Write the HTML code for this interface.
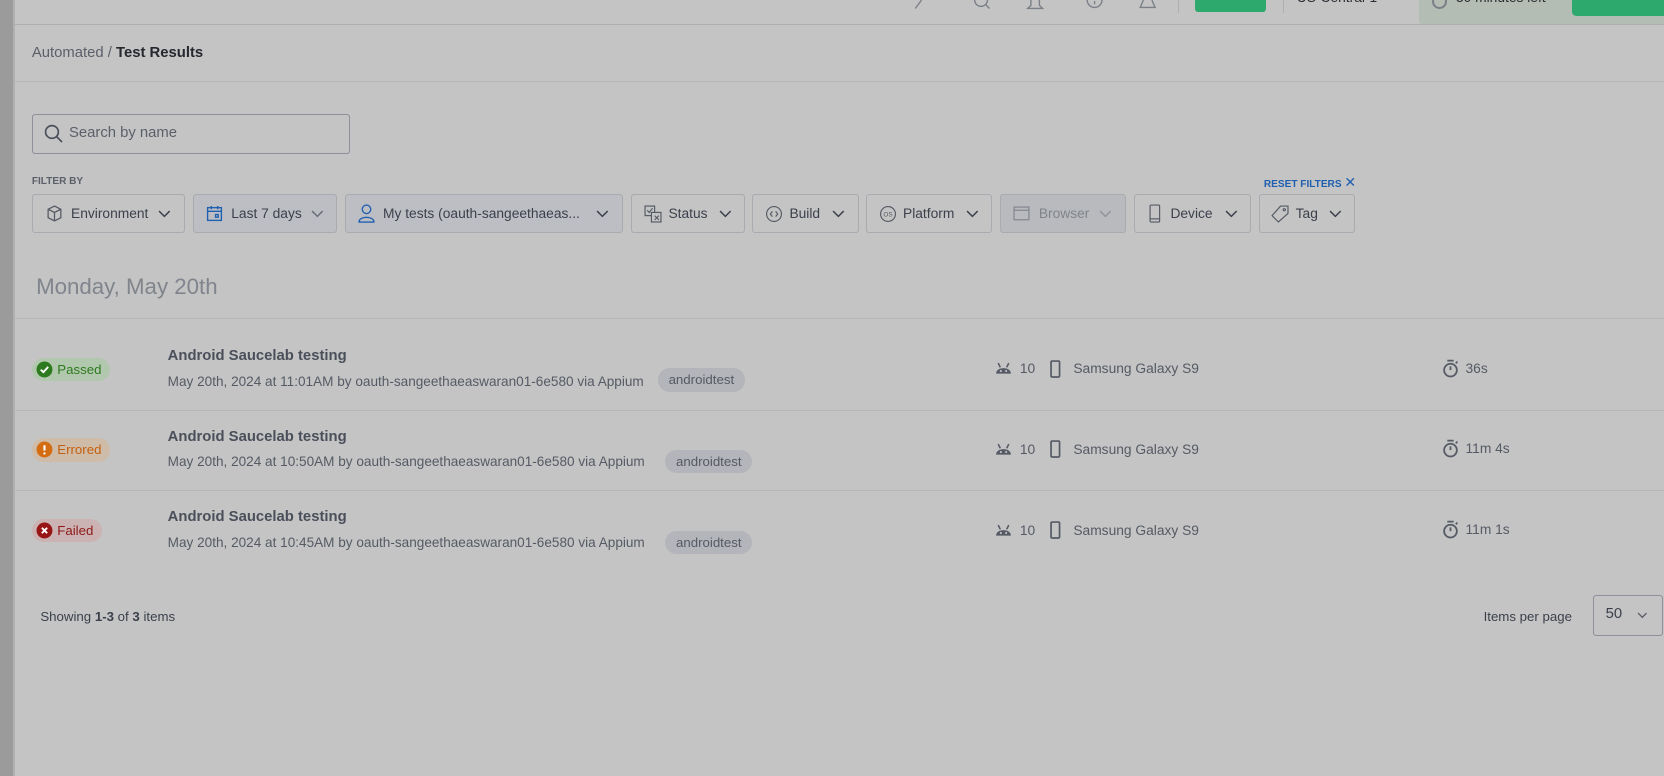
<!DOCTYPE html>
<html><head><meta charset="utf-8">
<style>
html,body{margin:0;padding:0;background:#c4c4c4;overflow:hidden;}
#w{position:relative;width:1568px;height:731px;zoom:1.06122;font-family:"Liberation Sans",sans-serif;color:#3b404b;}
.a{position:absolute;}
.btn{position:absolute;top:183px;border:1px solid #a9abb1;border-radius:3px;box-sizing:border-box;height:37px;display:flex;align-items:center;font-size:13px;color:#3b404b;}
.btn svg{flex:none}
.chev{margin-left:auto;margin-right:12px}
.t{font-size:14px;font-weight:bold;color:#4a4f5a}
.s{font-size:12.8px;color:#555a64}
.tag{position:absolute;height:22px;line-height:22px;padding:0 10px;border-radius:11px;background:#b3b5ba;font-size:12.5px;color:#555a64}
.badge{position:absolute;left:30px;height:22px;border-radius:11px;display:flex;align-items:center;font-size:12.5px;padding:0 8px 0 4px}
.line{position:absolute;left:14px;right:0;height:1px;background:#b5b6b8}
.meta{position:absolute;font-size:13px;color:#555a64;display:flex;align-items:center}
</style></head><body><div id="w">
<div class="a" style="left:0;top:0;width:12px;height:731px;background:#9b9b9b"></div>
<div class="a" style="left:12px;top:0;width:2px;height:731px;background:#b0b0b0"></div>
<div class="a" style="left:14px;top:23px;width:1554px;height:1px;background:#aeafb3"></div>
<svg class="a" style="left:858px;top:0" width="240" height="10" fill="none" stroke="#7b7f88" stroke-width="1.3">
<path d="M4 8 L10 0"/><circle cx="66" cy="0" r="6"/><path d="M70 4 L74 8"/>
<path d="M113 0 v5 l-3 3 h14 l-3-3 v-5"/><circle cx="173" cy="0" r="7"/><path d="M173 1 v3"/>
<path d="M219 0 l-3 7 h14 l-3-7"/></svg>
<div class="a" style="left:1110px;top:0;width:1px;height:12px;background:#aeafb3"></div>
<div class="a" style="left:1126px;top:0;width:67px;height:11px;background:#2ea96e;border-radius:0 0 3px 3px"></div>
<div class="a" style="left:1209px;top:0;width:1px;height:12px;background:#aeafb3"></div>
<div class="a" style="left:1222px;top:-9px;font-size:13px;color:#2a2d33">US-Central-1</div>
<div class="a" style="left:1337px;top:0;width:231px;height:23px;background:#b3bdb3;border-radius:0 0 0 3px"></div>
<div class="a" style="left:1349px;top:-6px;width:11px;height:11px;border:2px solid #7b7f88;border-radius:50%"></div>
<div class="a" style="left:1372px;top:-9px;font-size:13px;color:#2a2d33">30 minutes left</div>
<div class="a" style="left:1481px;top:0;width:87px;height:15px;background:#2ea96e;border-radius:0 0 0 4px"></div>
<div class="a" style="left:30px;top:42px;font-size:14px;color:#5a5f69">Automated / <span style="color:#25282e;font-weight:bold">Test Results</span></div>
<div class="line" style="top:76px"></div>
<div class="a" style="left:30px;top:107px;width:300px;height:38px;border:1px solid #8e919a;border-radius:3px;box-sizing:border-box"></div>
<svg class="a" style="left:41px;top:117px" width="18" height="18" fill="none" stroke="#4a4f5a" stroke-width="1.6"><circle cx="7.5" cy="7.5" r="6"/><path d="M12 12 l5 5"/></svg>
<div class="a" style="left:65px;top:118px;font-size:14px;color:#5a5f69">Search by name</div>
<div class="a" style="left:30px;top:166px;font-size:9.5px;font-weight:bold;color:#5a5f69">FILTER BY</div>
<div class="a" style="left:1191px;top:165px;font-size:9.5px;font-weight:bold;color:#1f5fb0">RESET FILTERS <span style="font-size:13px;font-weight:normal">✕</span></div>
<div class="btn" style="left:30px;width:144px"><svg style="margin:0 8px 0 12px" width="16" height="16" fill="none" stroke="#555a64" stroke-width="1.2"><path d="M8 1 L14 4 V12 L8 15 L2 12 V4 Z M2 4 L8 7 L14 4 M8 7 V15"/></svg>Environment<svg class="chev" width="12" height="8" fill="none" stroke="#3b404b" stroke-width="1.4"><path d="M1 1 L6 6 L11 1"/></svg></div>
<div class="btn" style="left:182px;width:136px;background:#bcbec4"><svg style="margin:0 8px 0 11px" width="16" height="16" fill="none" stroke="#2060b0" stroke-width="1.3"><rect x="1.5" y="2.5" width="13" height="12"/><path d="M1.5 6 H14.5 M5 1 V4 M11 1 V4"/><rect x="9" y="9" width="2.5" height="2.5"/></svg>Last 7 days<svg class="chev" width="12" height="8" fill="none" stroke="#6a6e78" stroke-width="1.4"><path d="M1 1 L6 6 L11 1"/></svg></div>
<div class="btn" style="left:325px;width:262px;background:#bcbec4"><svg style="margin:0 8px 0 11px" width="16" height="18" fill="none" stroke="#2060b0" stroke-width="1.3"><circle cx="8" cy="5" r="4"/><path d="M1 17 C1 11 15 11 15 17 Z"/></svg>My tests (oauth-sangeethaeas...<svg class="chev" width="12" height="8" fill="none" stroke="#3b404b" stroke-width="1.4"><path d="M1 1 L6 6 L11 1"/></svg></div>
<div class="btn" style="left:595px;width:107px"><svg style="margin:0 6px 0 11px" width="17" height="17" fill="none" stroke="#555a64" stroke-width="1.1"><rect x="1" y="1" width="9" height="9"/><rect x="7" y="7" width="9" height="9" fill="#c4c4c4"/><path d="M3 5 l2 2 l3-4 M10 10 l4 4 M14 10 l-4 4"/></svg>Status<svg class="chev" width="12" height="8" fill="none" stroke="#3b404b" stroke-width="1.4"><path d="M1 1 L6 6 L11 1"/></svg></div>
<div class="btn" style="left:709px;width:100px"><svg style="margin:0 6px 0 11px" width="17" height="17" fill="none" stroke="#555a64" stroke-width="1.1"><circle cx="8.5" cy="8.5" r="7"/><path d="M7 6 l-2 2.5 l2 2.5 M10 6 l2 2.5 l-2 2.5"/></svg>Build<svg class="chev" width="12" height="8" fill="none" stroke="#3b404b" stroke-width="1.4"><path d="M1 1 L6 6 L11 1"/></svg></div>
<div class="btn" style="left:816px;width:119px"><svg style="margin:0 6px 0 11px" width="17" height="17" fill="none" stroke="#555a64" stroke-width="1.1"><circle cx="8.5" cy="8.5" r="7"/><text x="8.5" y="11" font-size="6" text-anchor="middle" fill="#555a64" stroke="none" font-family="Liberation Sans">OS</text></svg>Platform<svg class="chev" width="12" height="8" fill="none" stroke="#3b404b" stroke-width="1.4"><path d="M1 1 L6 6 L11 1"/></svg></div>
<div class="btn" style="left:942px;width:119px;background:#b9babd;color:#80848c"><svg style="margin:0 8px 0 12px" width="16" height="14" fill="none" stroke="#80848c" stroke-width="1.1"><rect x="1" y="1" width="14" height="12"/><path d="M1 4 H15"/></svg>Browser<svg class="chev" width="12" height="8" fill="none" stroke="#90939a" stroke-width="1.4"><path d="M1 1 L6 6 L11 1"/></svg></div>
<div class="btn" style="left:1069px;width:110px"><svg style="margin:0 9px 0 13px" width="11" height="18" fill="none" stroke="#555a64" stroke-width="1.1"><rect x="1" y="1" width="9" height="16" rx="1"/><path d="M1 14 H10"/></svg>Device<svg class="chev" width="12" height="8" fill="none" stroke="#3b404b" stroke-width="1.4"><path d="M1 1 L6 6 L11 1"/></svg></div>
<div class="btn" style="left:1186px;width:91px"><svg style="margin:0 6px 0 11px" width="17" height="17" fill="none" stroke="#555a64" stroke-width="1.1"><path d="M9 1 H16 V8 L7 16 L1 10 Z"/><circle cx="12.5" cy="4.5" r="1"/></svg>Tag<svg class="chev" width="12" height="8" fill="none" stroke="#3b404b" stroke-width="1.4"><path d="M1 1 L6 6 L11 1"/></svg></div>
<div class="a" style="left:34px;top:258px;font-size:21px;color:#80848c">Monday, May 20th</div>
<div class="line" style="top:300px"></div>
<div class="line" style="top:386px"></div>
<div class="line" style="top:462px"></div>
<div class="badge" style="top:337px;background:#b2c8ae;color:#2e7a1e"><svg width="16" height="16" style="margin-right:4px"><circle cx="8" cy="8" r="7.5" fill="#2e7a1e"/><path d="M4.5 8.2 L7 10.5 L11.5 5.5" stroke="#fff" stroke-width="1.8" fill="none"/></svg>Passed</div>
<div class="badge" style="top:413px;background:#cfbca8;color:#c45f0e"><svg width="16" height="16" style="margin-right:4px"><circle cx="8" cy="8" r="7.5" fill="#d46c12"/><path d="M8 4 V9" stroke="#fff" stroke-width="2"/><circle cx="8" cy="11.7" r="1.1" fill="#fff"/></svg>Errored</div>
<div class="badge" style="top:489px;background:#cbb3b3;color:#8e1818"><svg width="16" height="16" style="margin-right:4px"><circle cx="8" cy="8" r="7.5" fill="#981515"/><path d="M5.5 5.5 L10.5 10.5 M10.5 5.5 L5.5 10.5" stroke="#fff" stroke-width="1.8"/></svg>Failed</div>

<div class="a t" style="left:158px;top:328px">Android Saucelab testing</div>
<div class="a s" style="left:158px;top:352px">May 20th, 2024 at 11:01AM by oauth-sangeethaeaswaran01-6e580 via Appium</div>
<div class="tag" style="left:620px;top:347px">androidtest</div>
<div class="a t" style="left:158px;top:404px">Android Saucelab testing</div>
<div class="a s" style="left:158px;top:428px">May 20th, 2024 at 10:50AM by oauth-sangeethaeaswaran01-6e580 via Appium</div>
<div class="tag" style="left:627px;top:424px">androidtest</div>
<div class="a t" style="left:158px;top:480px">Android Saucelab testing</div>
<div class="a s" style="left:158px;top:504px">May 20th, 2024 at 10:45AM by oauth-sangeethaeaswaran01-6e580 via Appium</div>
<div class="tag" style="left:627px;top:500px">androidtest</div>

<div class="meta" style="left:938px;top:339px"><svg width="16" height="12"><path d="M1 11 C1 4 15 4 15 11 Z" fill="#555a64"/><path d="M3 1 L5 5 M13 1 L11 5" stroke="#555a64" stroke-width="1.5"/><circle cx="5.5" cy="8.5" r="1" fill="#c4c4c4"/><circle cx="10.5" cy="8.5" r="1" fill="#c4c4c4"/></svg><span style="margin-left:7px">10</span><svg style="margin-left:14px" width="10" height="17" fill="none" stroke="#555a64" stroke-width="1.6"><rect x="1" y="1" width="8" height="15" rx="1"/></svg><span style="margin-left:12px">Samsung Galaxy S9</span></div>
<div class="meta" style="left:938px;top:415px"><svg width="16" height="12"><path d="M1 11 C1 4 15 4 15 11 Z" fill="#555a64"/><path d="M3 1 L5 5 M13 1 L11 5" stroke="#555a64" stroke-width="1.5"/><circle cx="5.5" cy="8.5" r="1" fill="#c4c4c4"/><circle cx="10.5" cy="8.5" r="1" fill="#c4c4c4"/></svg><span style="margin-left:7px">10</span><svg style="margin-left:14px" width="10" height="17" fill="none" stroke="#555a64" stroke-width="1.6"><rect x="1" y="1" width="8" height="15" rx="1"/></svg><span style="margin-left:12px">Samsung Galaxy S9</span></div>
<div class="meta" style="left:938px;top:491px"><svg width="16" height="12"><path d="M1 11 C1 4 15 4 15 11 Z" fill="#555a64"/><path d="M3 1 L5 5 M13 1 L11 5" stroke="#555a64" stroke-width="1.5"/><circle cx="5.5" cy="8.5" r="1" fill="#c4c4c4"/><circle cx="10.5" cy="8.5" r="1" fill="#c4c4c4"/></svg><span style="margin-left:7px">10</span><svg style="margin-left:14px" width="10" height="17" fill="none" stroke="#555a64" stroke-width="1.6"><rect x="1" y="1" width="8" height="15" rx="1"/></svg><span style="margin-left:12px">Samsung Galaxy S9</span></div>

<div class="meta" style="left:1359px;top:338px"><svg width="16" height="18" fill="none" stroke="#555a64" stroke-width="1.7"><circle cx="8" cy="10.5" r="6"/><path d="M5 1.5 H11 M8 7 V10.5 M13 4 L14.5 2.5"/></svg><span style="margin-left:6px">36s</span></div>
<div class="meta" style="left:1359px;top:414px"><svg width="16" height="18" fill="none" stroke="#555a64" stroke-width="1.7"><circle cx="8" cy="10.5" r="6"/><path d="M5 1.5 H11 M8 7 V10.5 M13 4 L14.5 2.5"/></svg><span style="margin-left:6px">11m 4s</span></div>
<div class="meta" style="left:1359px;top:490px"><svg width="16" height="18" fill="none" stroke="#555a64" stroke-width="1.7"><circle cx="8" cy="10.5" r="6"/><path d="M5 1.5 H11 M8 7 V10.5 M13 4 L14.5 2.5"/></svg><span style="margin-left:6px">11m 1s</span></div>

<div class="a" style="left:38px;top:574px;font-size:12.5px;color:#3b404b">Showing <b>1-3</b> of <b>3</b> items</div>
<div class="a" style="left:1398px;top:574px;font-size:12.5px;color:#3b404b">Items per page</div>
<div class="a" style="left:1501px;top:561px;width:66px;height:38px;border:1px solid #8e919a;border-radius:3px;box-sizing:border-box"></div>
<div class="a" style="left:1513px;top:571px;font-size:14px;color:#3b404b">50</div>
<svg class="a" style="left:1543px;top:577px" width="10" height="6" fill="none" stroke="#555a64" stroke-width="1.2"><path d="M1 1 L5 5 L9 1"/></svg>
</div></body></html>
